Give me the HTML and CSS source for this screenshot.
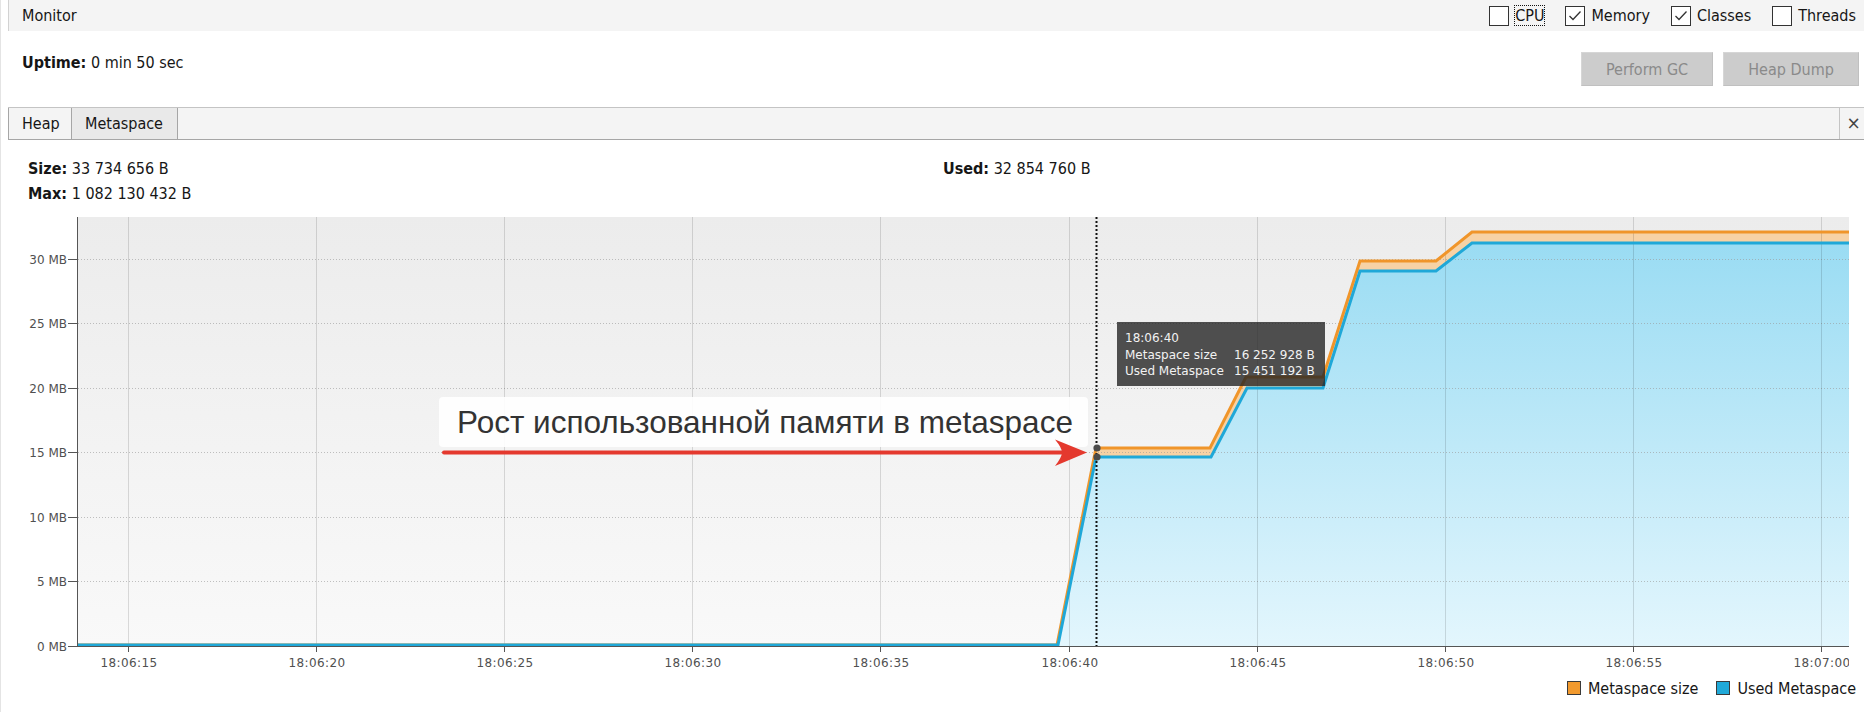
FILE: index.html
```html
<!DOCTYPE html>
<html lang="ru">
<head>
<meta charset="utf-8">
<title>Monitor</title>
<link rel="stylesheet" href="styles.css">
</head>
<body>
<div class="monitor-bar">
  <span class="title">Monitor</span>
  <div class="checks">
    <div class="check"><span class="box"></span><span class="lbl focus">CPU</span></div>
    <div class="check"><span class="box"><svg width="18" height="18" viewBox="0 0 18 18"><polyline points="3.5,9 7,12.5 14.5,4.5" fill="none" stroke="#333" stroke-width="1.3"/></svg></span><span class="lbl">Memory</span></div>
    <div class="check"><span class="box"><svg width="18" height="18" viewBox="0 0 18 18"><polyline points="3.5,9 7,12.5 14.5,4.5" fill="none" stroke="#333" stroke-width="1.3"/></svg></span><span class="lbl">Classes</span></div>
    <div class="check"><span class="box"></span><span class="lbl">Threads</span></div>
  </div>
</div>

<div class="info-row">
  <div class="uptime"><b>Uptime:</b> 0 min 50 sec</div>
  <div class="buttons">
    <button class="btn btn-gc">Perform GC</button>
    <button class="btn btn-dump">Heap Dump</button>
  </div>
</div>

<div class="tabbar">
  <div class="tab tab-heap">Heap</div>
  <div class="tab tab-active">Metaspace</div>
  <div class="tab-spacer"></div>
  <div class="tab-close">×</div>
</div>

<div class="stats">
  <div class="stat-col">
    <div><b>Size:</b> 33 734 656 B</div>
    <div><b>Max:</b> 1 082 130 432 B</div>
  </div>
  <div class="stat-col">
    <div><b>Used:</b> 32 854 760 B</div>
  </div>
</div>

<div class="chart-wrap">
  <svg class="chart" width="1864" height="470" viewBox="0 200 1864 470">
    <defs>
      <linearGradient id="bgGrad" x1="0" y1="217" x2="0" y2="646" gradientUnits="userSpaceOnUse">
        <stop offset="0" stop-color="#ececec"/>
        <stop offset="1" stop-color="#f9f9f9"/>
      </linearGradient>
      <linearGradient id="blueGrad" x1="0" y1="243" x2="0" y2="646" gradientUnits="userSpaceOnUse">
        <stop offset="0" stop-color="#9adcf3"/>
        <stop offset="1" stop-color="#e3f6fd"/>
      </linearGradient>
      <clipPath id="labelClip"><rect x="0" y="200" width="1849" height="470"/></clipPath>
    </defs>

    <rect x="78" y="217" width="1771" height="429" fill="url(#bgGrad)"/>

    <polygon fill="#f7d2a5" points="78,645 1057,645 1096,448 1210,448 1246,377 1323,377 1360,261 1436,261 1472,232 1849,232 1849,243 1472,243 1436,271 1360,271 1323,388 1247,388 1211,457 1096,457 1058,645"/>
    <polygon fill="url(#blueGrad)" points="78,645 1058,645 1096,457 1211,457 1247,388 1323,388 1360,271 1436,271 1472,243 1849,243 1849,646 78,646"/>

    <path d="M78 259.5H1849M78 323.5H1849M78 388.5H1849M78 452.5H1849M78 517.5H1849M78 581.5H1849" stroke="#9a9a9a" stroke-width="1" stroke-dasharray="1 2" opacity="0.6"/>
    <path d="M128.5 217V646M316.5 217V646M504.5 217V646M692.5 217V646M880.5 217V646M1069.5 217V646M1257.5 217V646M1445.5 217V646M1633.5 217V646M1821.5 217V646" stroke="rgba(0,0,0,0.13)" stroke-width="1"/>

    <polyline fill="none" stroke="#f0952a" stroke-width="3" points="78,645 1057,645 1096,448 1210,448 1246,377 1323,377 1360,261 1436,261 1472,232 1849,232"/>
    <polyline fill="none" stroke="#1fa8d8" stroke-width="3" points="78,645 1058,645 1096,457 1211,457 1247,388 1323,388 1360,271 1436,271 1472,243 1849,243"/>

    <path d="M77.5 217V647M77 646.5H1849" stroke="#555" stroke-width="1"/>
    <path d="M68 646.5H77M68 581.5H77M68 517.5H77M68 452.5H77M68 388.5H77M68 323.5H77M68 259.5H77" stroke="#555" stroke-width="1"/>
    <path d="M128.5 646V652M316.5 646V652M504.5 646V652M692.5 646V652M880.5 646V652M1069.5 646V652M1257.5 646V652M1445.5 646V652M1633.5 646V652M1821.5 646V652" stroke="#555" stroke-width="1"/>

    <line x1="1096.5" y1="217" x2="1096.5" y2="646" stroke="#111" stroke-width="2" stroke-dasharray="2 2"/>
    <circle cx="1097" cy="448" r="3.6" fill="#4a4a4a"/>
    <circle cx="1097" cy="457" r="3.6" fill="#4a4a4a"/>

    <g class="ylabels" text-anchor="end">
      <text x="67" y="650.5">0 MB</text>
      <text x="67" y="586">5 MB</text>
      <text x="67" y="521.5">10 MB</text>
      <text x="67" y="457">15 MB</text>
      <text x="67" y="392.5">20 MB</text>
      <text x="67" y="328">25 MB</text>
      <text x="67" y="263.5">30 MB</text>
    </g>
    <g class="xlabels" text-anchor="middle" clip-path="url(#labelClip)">
      <text x="129" y="666.5">18:06:15</text>
      <text x="317" y="666.5">18:06:20</text>
      <text x="505" y="666.5">18:06:25</text>
      <text x="693" y="666.5">18:06:30</text>
      <text x="881" y="666.5">18:06:35</text>
      <text x="1070" y="666.5">18:06:40</text>
      <text x="1258" y="666.5">18:06:45</text>
      <text x="1446" y="666.5">18:06:50</text>
      <text x="1634" y="666.5">18:06:55</text>
      <text x="1822" y="666.5">18:07:00</text>
    </g>
  </svg>

  <div class="annotation">Рост использованной памяти в metaspace</div>

  <svg class="arrow" width="1864" height="470" viewBox="0 200 1864 470">
    <line x1="444" y1="452.5" x2="1062" y2="452.5" stroke="#e4392e" stroke-width="4" stroke-linecap="round"/>
    <path d="M1055 439.5L1087 452.5L1055 466Q1062 457 1062 452.5Q1062 448 1055 439.5Z" fill="#e4392e"/>
  </svg>

  <div class="tooltip">
    <span class="tt-time">18:06:40</span>
    <span>Metaspace size</span><span>16 252 928 B</span>
    <span>Used Metaspace</span><span>15 451 192 B</span>
  </div>
</div>

<div class="legend">
  <div class="legend-item"><span class="swatch swatch-size"></span>Metaspace size</div>
  <div class="legend-item"><span class="swatch swatch-used"></span>Used Metaspace</div>
</div>
</body>
</html>
```

FILE: styles.css
```css
* {
  box-sizing: border-box;
}

html,
body {
  margin: 0;
  padding: 0;
}

body {
  width: 1864px;
  height: 712px;
  overflow: hidden;
  background: #ffffff;
  color: #161616;
  font-family: "DejaVu Sans Condensed", "DejaVu Sans", sans-serif;
  font-stretch: condensed;
  font-size: 16px;
  box-shadow: inset 1px 0 0 #e4e4e4;
}

/* top bar */
.monitor-bar {
  margin-left: 8px;
  height: 31px;
  background: #f4f4f4;
  border-left: 1px solid #d2d2d2;
  display: flex;
  align-items: center;
  justify-content: space-between;
  padding: 0 8px 0 13px;
}

.checks {
  display: flex;
  align-items: center;
  gap: 21px;
}

.check {
  display: flex;
  align-items: center;
  gap: 6px;
}

.box {
  width: 20px;
  height: 20px;
  border: 1px solid #333;
  background: #fff;
  display: flex;
  align-items: center;
  justify-content: center;
}

.box svg {
  display: block;
}

.lbl {
  line-height: 19px;
}

.focus {
  outline: 1px dotted #111;
  outline-offset: 0;
}

/* uptime + buttons */
.info-row {
  height: 76px;
  display: flex;
  justify-content: space-between;
  align-items: flex-start;
}

.uptime {
  padding: 22px 0 0 22px;
  line-height: 20px;
}

.buttons {
  display: flex;
  gap: 10px;
  margin: 21px 5px 0 0;
}

.btn {
  height: 34px;
  padding: 0;
  font: inherit;
  color: #8a8a8a;
  background: #cccccc;
  border: 1px solid #c0c0c0;
  border-top-color: #d6d6d6;
  border-left-color: #d6d6d6;
}

.btn-gc {
  width: 132px;
}

.btn-dump {
  width: 136px;
}

/* tabs */
.tabbar {
  margin-left: 8px;
  height: 33px;
  display: flex;
  background: #f4f4f4;
  border-top: 1px solid #c4c4c4;
  border-bottom: 1px solid #a6a6a6;
}

.tab {
  line-height: 31px;
  padding-left: 13px;
  border-right: 1px solid #a6a6a6;
}

.tab-heap {
  width: 64px;
  border-left: 1px solid #a6a6a6;
}

.tab-active {
  width: 106px;
  background: #e9e9e9;
}

.tab-spacer {
  flex: 1;
  border-right: 1px solid #c4c4c4;
}

.tab-close {
  width: 24px;
  padding-left: 3px;
  text-align: center;
  line-height: 30px;
  font-family: "DejaVu Sans", sans-serif;
  font-stretch: normal;
  font-size: 17px;
  color: #444;
}

/* stats */
.stats {
  height: 60px;
  padding: 16px 0 0 28px;
  display: grid;
  grid-template-columns: 915px auto;
  line-height: 25px;
}

/* chart */
.chart-wrap {
  position: relative;
  height: 470px;
}

.chart {
  display: block;
}

.ylabels,
.xlabels {
  font-family: "DejaVu Sans", sans-serif;
  font-stretch: normal;
  font-size: 12px;
  fill: #505050;
}

.xlabels {
  letter-spacing: 0.4px;
}

.annotation {
  position: absolute;
  left: 439px;
  top: 197px;
  width: 649px;
  height: 50px;
  padding-left: 18px;
  background: rgba(255, 255, 255, 0.9);
  border-radius: 4px;
  font-family: "Liberation Sans", Arial, sans-serif;
  font-stretch: normal;
  font-size: 31.5px;
  line-height: 50px;
  color: #333;
  white-space: nowrap;
}

.arrow {
  position: absolute;
  left: 0;
  top: 0;
  pointer-events: none;
}

.tooltip {
  position: absolute;
  left: 1117px;
  top: 122px;
  width: 208px;
  height: 64px;
  padding: 8px;
  background: rgba(38, 38, 38, 0.8);
  color: #f2f2f2;
  font-family: "DejaVu Sans", sans-serif;
  font-stretch: normal;
  font-size: 12px;
  line-height: 16.5px;
  display: grid;
  grid-template-columns: 109px auto;
  white-space: nowrap;
}

.tt-time {
  grid-column: 1 / span 2;
}

/* legend */
.legend {
  height: 42px;
  padding: 0 8px 6px 0;
  display: flex;
  justify-content: flex-end;
  align-items: center;
  gap: 18px;
}

.legend-item {
  display: flex;
  align-items: center;
  gap: 7px;
}

.swatch {
  width: 14px;
  height: 14px;
  border: 1px solid #3a3a3a;
}

.swatch-size {
  background: #f29a2e;
}

.swatch-used {
  background: #20a9d8;
}
```
